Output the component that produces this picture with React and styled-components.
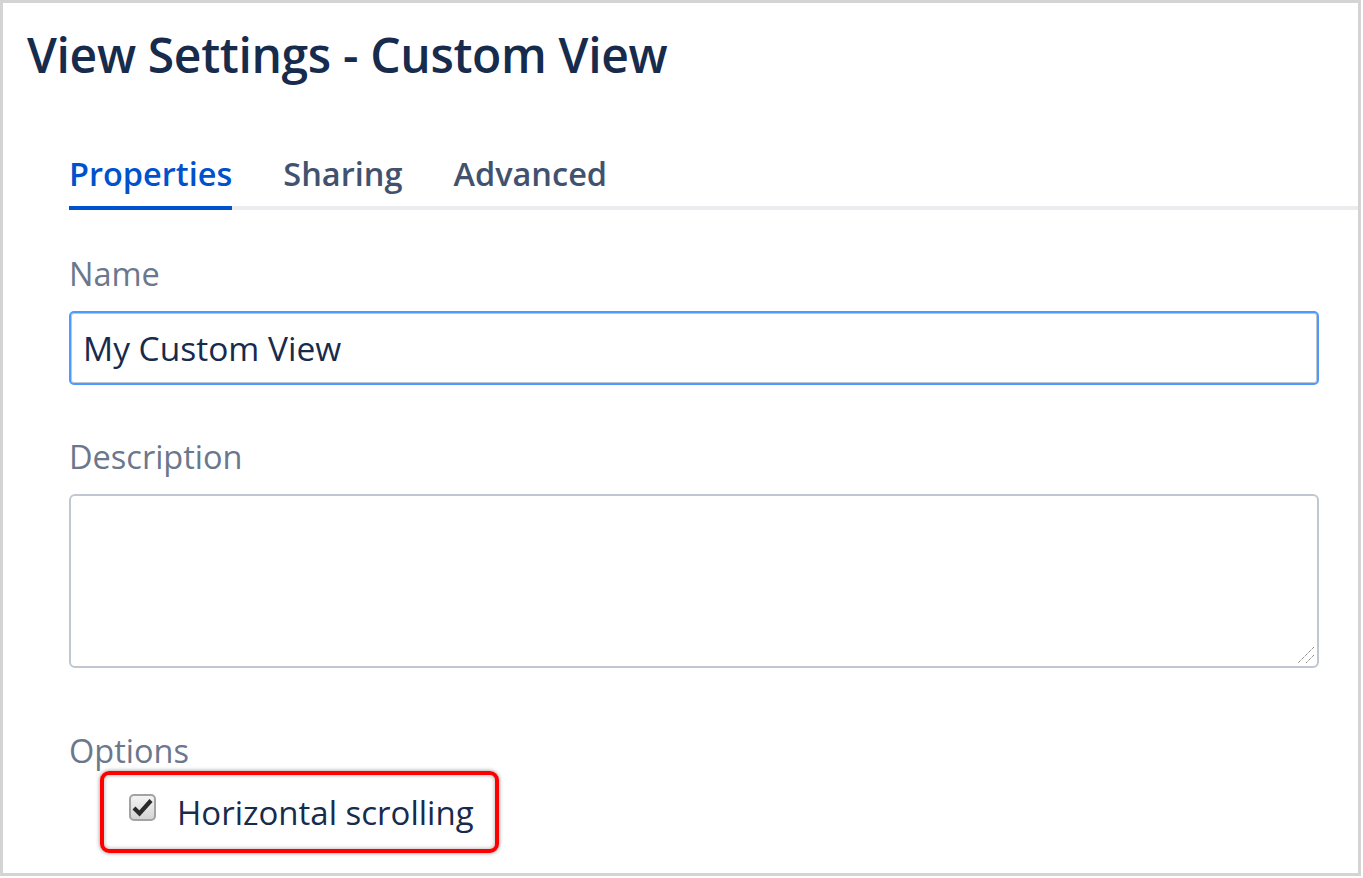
import React from "react";
import styled, { createGlobalStyle } from "styled-components";

const Global = createGlobalStyle`
  html, body { margin: 0; padding: 0; background: #ffffff; }
  body { font-family: "Open Sans", "Noto Sans", sans-serif; }
  * { box-sizing: border-box; }
`;

const Frame = styled.div`
  width: 1361px;
  height: 876px;
  border: 3px solid #d4d4d4;
  background: #ffffff;
  overflow: hidden;
`;

const Title = styled.h1`
  margin: 0;
  padding: 22px 0 0 24px;
  font-size: 48px;
  line-height: 60px;
  font-weight: 600;
  color: #172b4d;
  letter-spacing: -0.35px;
`;

const Body = styled.div`
  padding: 66px 0 0 66px;
`;

const Tabs = styled.div`
  display: flex;
  gap: 51px;
  border-bottom: 4px solid #ebecf0;
`;

const Tab = styled.div`
  font-size: 32.5px;
  line-height: 46px;
  font-weight: 600;
  color: ${(p) => (p.$active ? "#0052cc" : "#42526e")};
  padding-bottom: 9px;
  margin-bottom: -4px;
  border-bottom: 4px solid ${(p) => (p.$active ? "#0052cc" : "transparent")};
`;

const Form = styled.div`
  padding-right: 39px;
  display: flex;
  flex-direction: column;
`;

const Label = styled.div`
  font-size: 32.5px;
  line-height: 42px;
  color: #6b778c;
  margin-top: ${(p) => p.$top}px;
  margin-bottom: ${(p) => p.$bottom}px;
`;

const Input = styled.div`
  height: 74px;
  border: 2px solid #4c9aff;
  border-radius: 5px;
  box-shadow: inset 0 0 0 1px #c1c7d0;
  padding: 0 12px;
  display: flex;
  align-items: center;
  font-size: 33.5px;
  color: #172b4d;
`;

const TextArea = styled.div`
  position: relative;
  height: 174px;
  border: 2px solid #c1c7d0;
  border-radius: 6px;
`;

const Grip = styled.svg`
  position: absolute;
  right: 2px;
  bottom: 2px;
`;

const OptionBox = styled.div`
  margin-left: 31px;
  width: 399px;
  height: 82px;
  border: 4px solid #ff0000;
  border-radius: 9px;
  box-shadow: 0 0 4px rgba(0, 0, 0, 0.45), inset 0 0 4px rgba(0, 0, 0, 0.35);
  display: flex;
  align-items: center;
  padding-left: 25px;
  gap: 21px;
`;

const Check = styled.span`
  width: 27px;
  height: 27px;
  flex: none;
  border: 2px solid #a3a3a3;
  border-radius: 5px;
  background: linear-gradient(#f4f4f4, #d4d4d4);
  display: inline-flex;
  align-items: center;
  justify-content: center;
  margin-top: -9px;
`;

const OptionText = styled.span`
  font-size: 33px;
  color: #172b4d;
`;

export default function App() {
  return (
    <>
      <Global />
      <Frame>
        <Title>View Settings - Custom View</Title>
        <Body>
          <Tabs>
            <Tab $active>Properties</Tab>
            <Tab>Sharing</Tab>
            <Tab>Advanced</Tab>
          </Tabs>
          <Form>
            <Label $top={43} $bottom={16}>Name</Label>
            <Input>My Custom View</Input>
            <Label $top={51} $bottom={16}>Description</Label>
            <TextArea>
              <Grip width="22" height="22" viewBox="0 0 22 22">
                <path d="M21 5 L5 21 M21 13 L13 21" stroke="#555" strokeWidth="1" strokeDasharray="1 1" />
              </Grip>
            </TextArea>
            <Label $top={62} $bottom={-1}>Options</Label>
          </Form>
          <OptionBox>
            <Check>
              <svg width="21" height="19" viewBox="0 0 21 19">
                <path d="M2 10 L7.5 15.5 L19 2.5" fill="none" stroke="#2a2a2a" strokeWidth="4.2" strokeLinejoin="miter" />
              </svg>
            </Check>
            <OptionText>Horizontal scrolling</OptionText>
          </OptionBox>
        </Body>
      </Frame>
    </>
  );
}
